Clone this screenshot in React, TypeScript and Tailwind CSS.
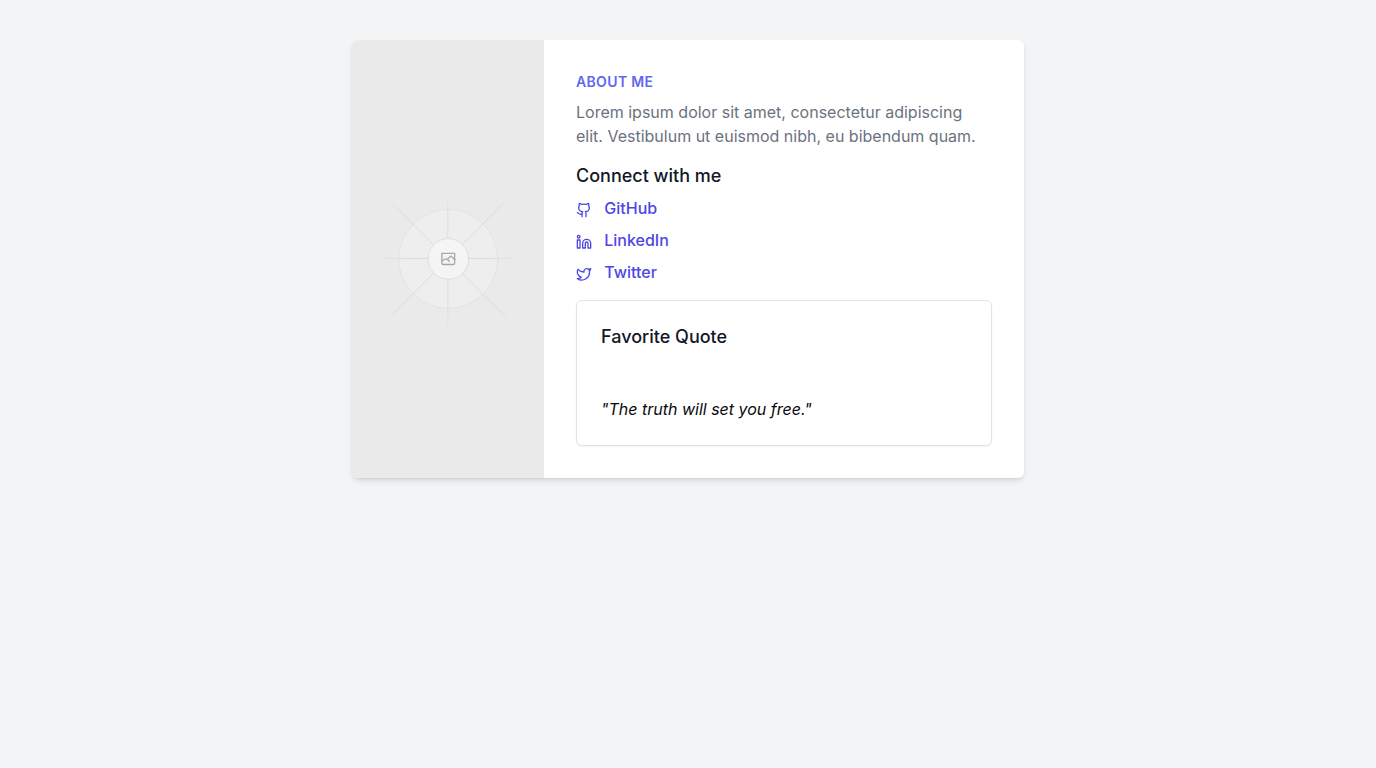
import { Github, Linkedin, Twitter } from "lucide-react";

const links = [
  { label: "GitHub", href: "#github", Icon: Github },
  { label: "LinkedIn", href: "#linkedin", Icon: Linkedin },
  { label: "Twitter", href: "#twitter", Icon: Twitter },
];

type FadeProps = { id: string; x1: number; y1: number; x2: number; y2: number };

function Fade({ id, x1, y1, x2, y2 }: FadeProps) {
  return (
    <linearGradient id={id} x1={x1} y1={y1} x2={x2} y2={y2} gradientUnits="userSpaceOnUse">
      <stop stopColor="#C9C9C9" stopOpacity="0" />
      <stop offset=".208" stopColor="#C9C9C9" />
      <stop offset=".792" stopColor="#C9C9C9" />
      <stop offset="1" stopColor="#C9C9C9" stopOpacity="0" />
    </linearGradient>
  );
}

function Placeholder({ className }: { className?: string }) {
  return (
    <svg
      className={className}
      viewBox="0 0 1200 1200"
      preserveAspectRatio="xMidYMid slice"
      fill="none"
      role="img"
      aria-label="Profile"
    >
      <defs>
        <Fade id="rise" x1={394} y1={806} x2={806} y2={394} />
        <Fade id="across" x1={404} y1={599} x2={797} y2={599} />
        <Fade id="down" x1={600} y1={404} x2={600} y2={796} />
        <Fade id="fall" x1={394} y1={395} x2={806} y2={807} />
      </defs>
      <rect width="1200" height="1200" fill="#EAEAEA" />
      <g opacity=".5" strokeWidth="2.418">
        <g opacity=".5">
          <circle cx="600.709" cy="599.879" r="136.621" fill="#FAFAFA" />
          <circle cx="600.709" cy="599.879" r="135.412" stroke="#C9C9C9" />
        </g>
        <path stroke="url(#rise)" d="M394 806 806 394" />
        <path stroke="url(#across)" d="M404.846 598.671h391.726" />
        <path stroke="url(#down)" d="M599.5 795.742V404.017" />
        <path stroke="url(#fall)" d="M394 395 806 807" />
        <circle cx="600.709" cy="599.879" r="56.825" fill="#fff" />
        <path
          fill="#666"
          fillRule="evenodd"
          clipRule="evenodd"
          d="M616.426 586.58h-31.434v16.176l3.553-3.554.531-.531h9.068l.074-.074 8.463-8.463h2.565l7.18 7.181V586.58Zm-15.715 14.654 3.698 3.699 1.283 1.282-2.565 2.565-1.282-1.283-5.2-5.199h-6.066l-5.514 5.514-.073.073v2.876a2.418 2.418 0 0 0 2.418 2.418h26.598a2.418 2.418 0 0 0 2.418-2.418v-8.317l-8.463-8.463-7.181 7.181-.071.072Zm-19.347 5.442v4.085a6.045 6.045 0 0 0 6.046 6.045h26.598a6.044 6.044 0 0 0 6.045-6.045v-7.108l1.356-1.355-1.282-1.283-.074-.073v-17.989h-38.689v23.43l-.146.146.146.147Z"
        />
        <circle cx="600.709" cy="599.879" r="55.616" stroke="#C9C9C9" />
      </g>
    </svg>
  );
}

export default function App() {
  return (
    <div className="min-h-screen bg-[#f3f4f6] px-4 py-10 font-['Inter',sans-serif] text-[#09090b]">
      <main className="mx-auto max-w-2xl overflow-hidden rounded-md bg-white shadow-md">
        <div className="flex">
          <Placeholder className="w-48 shrink-0" />
          <div className="min-w-0 flex-1 p-8">
            <h1 className="text-sm font-semibold tracking-wide text-[#6366f1] uppercase">About Me</h1>
            <p className="mt-2 text-[#6b7280]">
              Lorem ipsum dolor sit amet, consectetur adipiscing elit. Vestibulum ut euismod nibh, eu bibendum quam.
            </p>
            <h2 className="mt-4 text-lg leading-6 font-medium text-[#111827]">Connect with me</h2>
            <ul className="mt-2 space-y-2">
              {links.map(({ label, href, Icon }) => (
                <li key={label}>
                  <a href={href} className="font-medium text-[#4f46e5] hover:text-[#6366f1]">
                    <Icon className="mr-2 inline-block size-4 align-middle" aria-hidden="true" /> {label}
                  </a>
                </li>
              ))}
            </ul>
            <section className="mt-4 rounded-md border border-[#e4e4e7] bg-white shadow-xs">
              <div className="p-6">
                <h2 className="text-lg leading-6 font-medium text-[#111827]">Favorite Quote</h2>
              </div>
              <div className="p-6">
                <p className="italic">"The truth will set you free."</p>
              </div>
            </section>
          </div>
        </div>
      </main>
    </div>
  );
}
